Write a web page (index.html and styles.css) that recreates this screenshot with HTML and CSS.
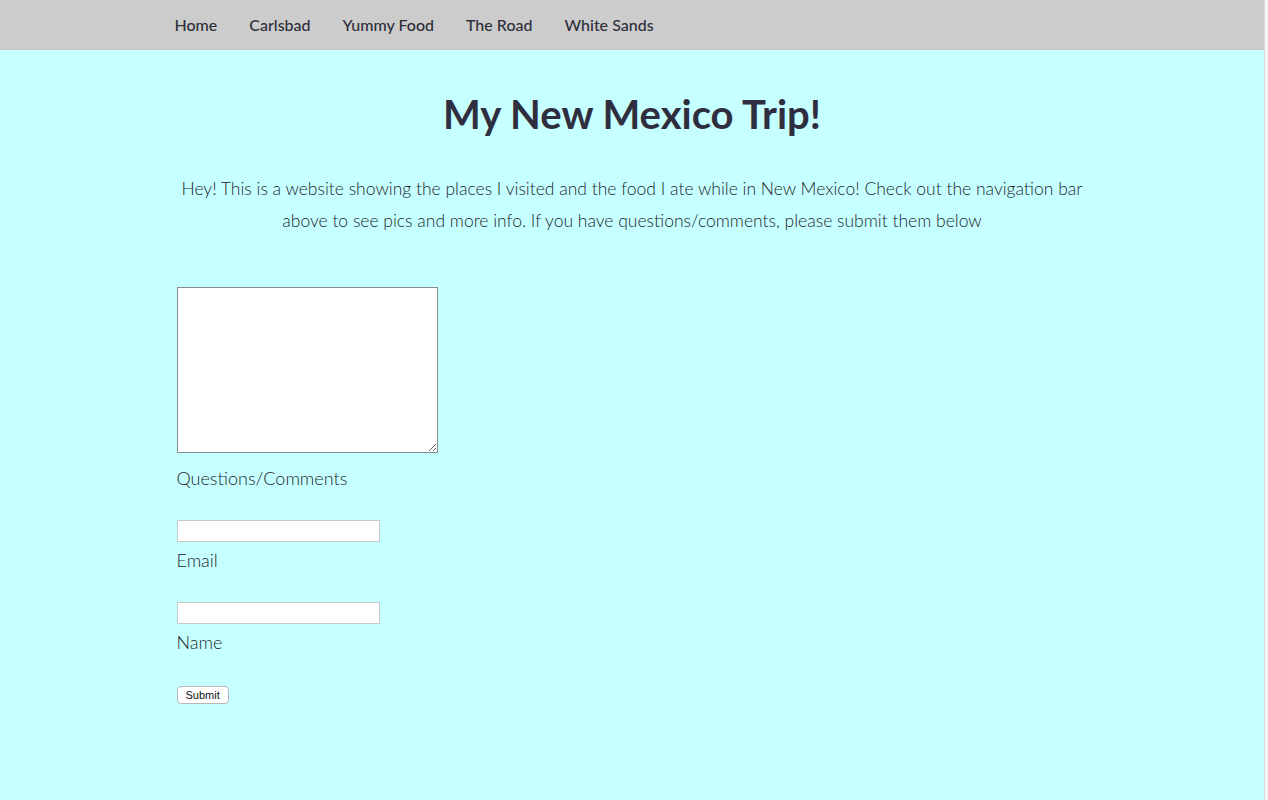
FILE: index.html
```html
<!DOCTYPE html>
<html lang="en">
<head>
<meta charset="utf-8">
<title>My New Mexico Trip!</title>
<link rel="stylesheet" href="styles.css">
</head>
<body>
<div class="page">
  <nav class="topnav">
    <div class="nav-inner">
      <a href="#" class="nav-link">Home</a>
      <a href="#" class="nav-link">Carlsbad</a>
      <a href="#" class="nav-link">Yummy Food</a>
      <a href="#" class="nav-link">The Road</a>
      <a href="#" class="nav-link">White Sands</a>
    </div>
  </nav>
  <main class="content">
    <h1 class="title">My New Mexico Trip!</h1>
    <p class="intro">Hey! This is a website showing the places I visited and the food I ate while in New Mexico! Check out the navigation bar above to see pics and more info. If you have questions/comments, please submit them below</p>
    <form class="form">
      <div class="field">
        <textarea class="area" id="comments"></textarea>
        <label class="label label-area" for="comments">Questions/Comments</label>
      </div>
      <div class="field">
        <input class="input" type="text" id="email">
        <label class="label" for="email">Email</label>
      </div>
      <div class="field">
        <input class="input" type="text" id="name">
        <label class="label" for="name">Name</label>
      </div>
      <button class="submit" type="button">Submit</button>
    </form>
  </main>
</div>
</body>
</html>
```

FILE: styles.css
```css
html {
  background: #f2f2f2;
  height: 100%;
}
body {
  margin: 0;
  height: 100%;
  font-family: Lato, "Open Sans", Arial, sans-serif;
  color: #2a2a38;
}
.page {
  width: calc(100% - 3px);
  min-height: 100%;
  background: #c6ffff;
  border-right: 1px solid #dcdcdc;
  box-sizing: border-box;
}
.topnav {
  background: #cccccc;
  height: 49px;
  border-bottom: 1px solid #c4c4c4;
}
.nav-inner {
  max-width: 935px;
  margin: 0 auto;
  height: 100%;
  display: flex;
  align-items: center;
  gap: 32px;
  padding-left: 10px;
  box-sizing: border-box;
}
.nav-link {
  font-size: 16px;
  color: #2e2e3a;
  text-decoration: none;
  font-weight: 500;
}
.content {
  max-width: 935px;
  margin: 0 auto;
  padding: 0 12px;
  box-sizing: border-box;
}
.title {
  margin: 0;
  padding-top: 39px;
  text-align: center;
  font-size: 40px;
  font-weight: 700;
  line-height: 50px;
  color: #2e2e3e;
}
.intro {
  margin: 34px -12px 0;
  text-align: center;
  font-size: 17.5px;
  font-weight: 300;
  line-height: 32px;
  color: #1f1f2c;
}
.form {
  margin-top: 50px;
  display: flex;
  flex-direction: column;
  align-items: flex-start;
}
.field {
  display: flex;
  flex-direction: column;
  align-items: flex-start;
  margin-bottom: 30px;
}
.area {
  display: block;
  width: 261px;
  height: 166px;
  box-sizing: border-box;
  border: 1px solid #8a8a8a;
  background: #fff;
  margin: 0;
  padding: 2px;
}
.input {
  display: block;
  width: 203px;
  height: 22px;
  box-sizing: border-box;
  border: 1px solid #c8c8c8;
  background: #fff;
  margin: 0;
  padding: 1px 2px;
}
.label {
  display: block;
  margin-top: 6px;
  font-size: 18px;
  font-weight: 300;
  line-height: 24px;
  color: #1f1f2c;
}
.label-area {
  margin-top: 13px;
}
.submit {
  margin-top: 2px;
  font-family: "Liberation Sans", Arial, sans-serif;
  font-size: 11px;
  height: 18px;
  padding: 0 8px;
  background: #fff;
  border: 1px solid #b8b8b8;
  border-radius: 4px;
  color: #111;
  line-height: 16px;
}
```
